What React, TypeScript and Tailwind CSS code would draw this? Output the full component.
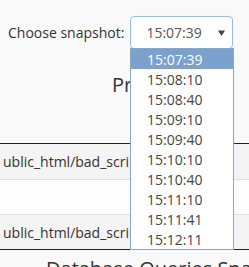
const SNAPSHOTS = [
  "15:07:39",
  "15:08:10",
  "15:08:40",
  "15:09:10",
  "15:09:40",
  "15:10:10",
  "15:10:40",
  "15:11:10",
  "15:11:41",
  "15:12:11",
];

const ROWS = ["ublic_html/bad_script.php", "", "ublic_html/bad_script.php"];

function SnapshotPicker() {
  return (
    <div className="flex items-center h-[33px] mt-[16px] pl-[8px] gap-[6px]">
      <span className="text-[14px] text-[#333]">Choose snapshot:</span>
      <div className="flex items-center justify-between w-[103px] h-[33px] pl-[15px] pr-[6px] bg-white border border-[#94bfe9] rounded-[4px] text-[14px] text-[#555]">
        <span>15:07:39</span>
        <svg width="7" height="6" viewBox="0 0 7 6" className="mr-[1px]">
          <path d="M0 0.5 L7 0.5 L3.5 6 Z" fill="#444" />
        </svg>
      </div>
    </div>
  );
}

function DropdownList() {
  return (
    <div className="absolute left-[130px] top-[48px] w-[104px] h-[202px] bg-white border border-[#8ea6c2] flex flex-col">
      {SNAPSHOTS.map((s, i) => (
        <div
          key={s}
          className={
            i === 0
              ? "h-[20px] flex items-center pl-[16px] text-[14px] bg-[#7ba1cf] text-white"
              : "h-[20px] flex items-center pl-[16px] text-[14px] text-[#444]"
          }
        >
          {s}
        </div>
      ))}
    </div>
  );
}

export default function App() {
  return (
    <div className="relative w-[249px] h-[267px] overflow-hidden bg-[#f9f9f9] text-[#333] font-['Open_Sans',sans-serif]">
      <SnapshotPicker />

      <h2 className="mt-[22px] pl-[112px] text-[20px] leading-[28px] whitespace-nowrap">Processes</h2>

      <div className="mt-[44px] border-t border-[#222] border-b">
        {ROWS.map((r, i) => (
          <div
            key={i}
            className={
              (i % 2 === 0 ? "bg-[#f4f4f4] " : "bg-[#fdfdfd] ") +
              (i > 0 ? "border-t border-[#dedede] " : "") +
              "h-[35px] flex items-center pl-[3px] text-[14px] whitespace-nowrap"
            }
          >
            {r}
          </div>
        ))}
      </div>

      <h2 className="mt-[5px] pl-[46px] text-[20px] leading-[28px] whitespace-nowrap">Database Queries Snapshot</h2>

      <DropdownList />
    </div>
  );
}
